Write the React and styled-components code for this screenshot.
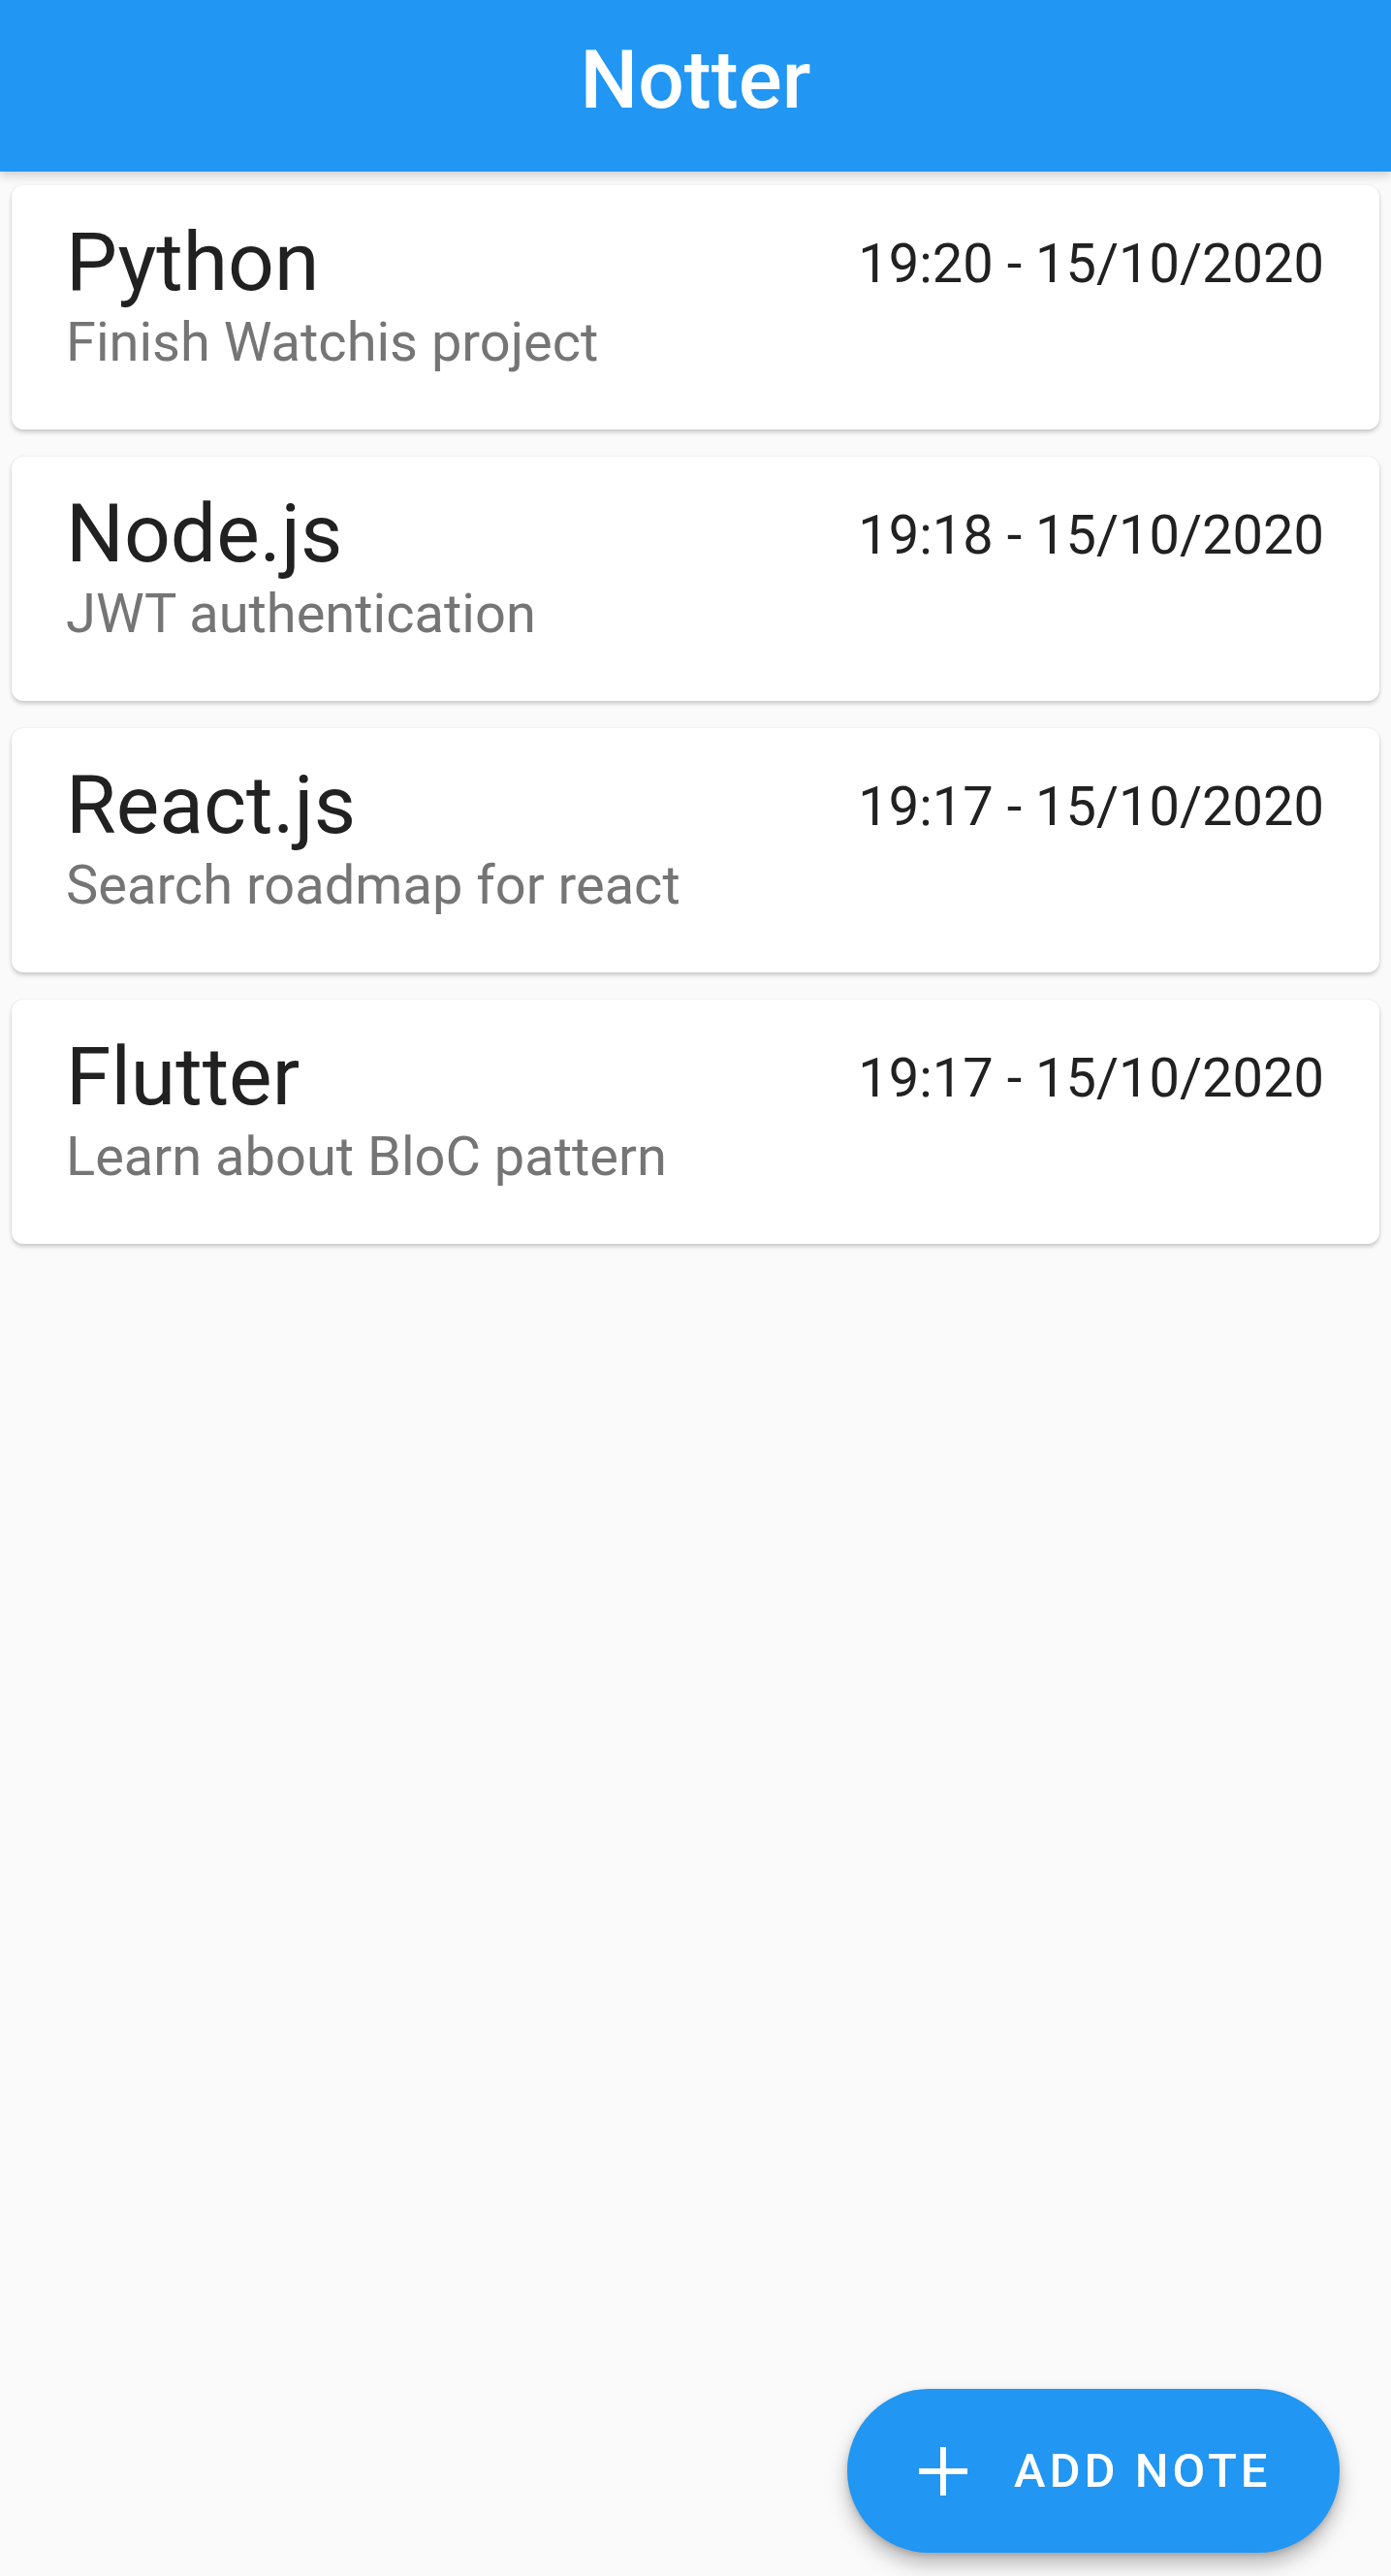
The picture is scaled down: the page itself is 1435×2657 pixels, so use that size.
import React from 'react';
import styled, { createGlobalStyle } from 'styled-components';

const GlobalStyle = createGlobalStyle`
  html, body {
    margin: 0;
    padding: 0;
    background: #fafafa;
    font-family: Roboto, "Liberation Sans", sans-serif;
  }
`;

const notes = [
  { title: 'Python', body: 'Finish Watchis project', date: '19:20 - 15/10/2020' },
  { title: 'Node.js', body: 'JWT authentication', date: '19:18 - 15/10/2020' },
  { title: 'React.js', body: 'Search roadmap for react', date: '19:17 - 15/10/2020' },
  { title: 'Flutter', body: 'Learn about BloC pattern', date: '19:17 - 15/10/2020' },
];

const App = () => {
  return (
    <Page>
      <GlobalStyle />
      <AppBar>
        <AppTitle>Notter</AppTitle>
      </AppBar>
      <NoteList>
        {notes.map((note) => (
          <NoteCard key={note.title}>
            <NoteText>
              <NoteTitle>{note.title}</NoteTitle>
              <NoteBody>{note.body}</NoteBody>
            </NoteText>
            <NoteDate>{note.date}</NoteDate>
          </NoteCard>
        ))}
      </NoteList>
      <Fab>
        <svg width="50" height="50" viewBox="0 0 50 50">
          <path d="M25 0v50M0 25h50" stroke="#fff" strokeWidth="6" fill="none" />
        </svg>
        <FabLabel>ADD NOTE</FabLabel>
      </Fab>
    </Page>
  );
};

const Page = styled.div`
  position: relative;
  min-height: 2657px;
  background: #fafafa;
`;

const AppBar = styled.header`
  height: 177px;
  background: #2196f3;
  display: flex;
  align-items: center;
  justify-content: center;
  box-shadow: 0 4px 10px rgba(0, 0, 0, 0.18);
  position: relative;
  z-index: 1;
`;

const AppTitle = styled.h1`
  margin: 0 0 12px;
  color: #fff;
  font-size: 84px;
  font-weight: 500;
  line-height: 1;
`;

const NoteList = styled.main`
  display: flex;
  flex-direction: column;
  gap: 28px;
  padding: 14px 12px;
`;

const NoteCard = styled.section`
  display: flex;
  justify-content: space-between;
  align-items: flex-start;
  height: 252px;
  box-sizing: border-box;
  padding: 30px 57px 0 56px;
  background: #fff;
  border-radius: 12px;
  box-shadow: 0 3px 4px rgba(0, 0, 0, 0.18), 0 0 2px rgba(0, 0, 0, 0.1);
`;

const NoteText = styled.div`
  display: flex;
  flex-direction: column;
`;

const NoteTitle = styled.h2`
  margin: 0;
  font-size: 84px;
  font-weight: 400;
  line-height: normal;
  color: #212121;
`;

const NoteBody = styled.p`
  margin: 0;
  font-size: 56px;
  line-height: normal;
  color: #757575;
`;

const NoteDate = styled.span`
  margin-top: 18px;
  font-size: 56px;
  line-height: normal;
  color: #212121;
`;

const Fab = styled.button`
  position: absolute;
  right: 53px;
  bottom: 24px;
  height: 169px;
  width: 508px;
  box-sizing: border-box;
  display: flex;
  align-items: center;
  gap: 48px;
  padding: 0 0 0 74px;
  border: none;
  border-radius: 85px;
  background: #2196f3;
  box-shadow: 0 12px 20px rgba(0, 0, 0, 0.25), 0 3px 6px rgba(0, 0, 0, 0.15);
  cursor: pointer;
`;

const FabLabel = styled.span`
  color: #fff;
  font-family: Roboto, "Liberation Sans", sans-serif;
  font-size: 49px;
  font-weight: 500;
  letter-spacing: 4px;
`;

export default App;
